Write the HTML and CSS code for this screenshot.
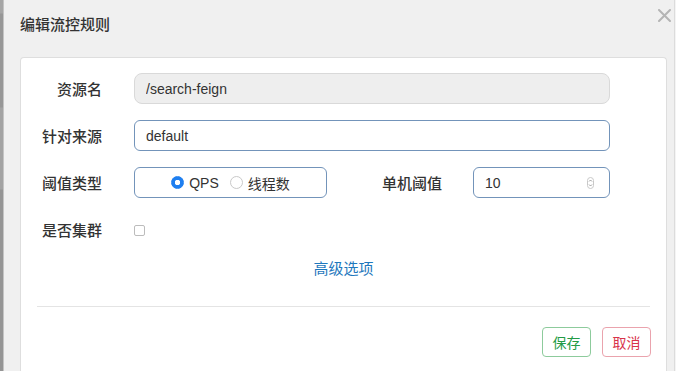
FILE: index.html
```html
<!DOCTYPE html>
<html lang="zh-CN">
<head>
    <meta charset="UTF-8">
    <meta name="viewport" content="width=device-width, initial-scale=1.0">
    <title>编辑流控规则</title>
    <link rel="stylesheet" href="styles.css">
</head>
<body>
    <div class="page-edge"></div>

    <div class="modal">
        <div class="modal-header">
            <h4 class="modal-title">编辑流控规则</h4>
            <span class="close">
                <svg width="13" height="13" viewBox="0 0 13 13">
                    <path d="M1 1 L12 12 M12 1 L1 12" stroke="#b4b4b4" stroke-width="2" stroke-linecap="round"/>
                </svg>
            </span>
        </div>

        <div class="panel">
            <form class="rule-form">
                <div class="form-row">
                    <label class="control-label">资源名</label>
                    <input class="form-control wide" type="text" value="/search-feign" disabled>
                </div>

                <div class="form-row">
                    <label class="control-label">针对来源</label>
                    <input class="form-control wide" type="text" value="default">
                </div>

                <div class="form-row">
                    <label class="control-label">阈值类型</label>
                    <div class="radio-box">
                        <label class="radio-item"><input type="radio" name="grade" class="radio" checked>QPS</label>
                        <label class="radio-item"><input type="radio" name="grade" class="radio">线程数</label>
                    </div>
                    <label class="control-label side-label">单机阈值</label>
                    <div class="num-box">
                        <input class="num-input" type="text" value="10">
                        <!-- spinner -->
                        <svg class="spinner" width="7" height="12" viewBox="0 0 7 12">
                            <rect x="0.5" y="0.5" width="6" height="11" rx="3" fill="#fff" stroke="#c8c8c8"/>
                            <path d="M2 4.5 L3.5 3 L5 4.5 M2 7.5 L3.5 9 L5 7.5" fill="none" stroke="#888" stroke-width="0.8"/>
                        </svg>
                    </div>
                </div>

                <div class="form-row">
                    <label class="control-label">是否集群</label>
                    <input type="checkbox" class="checkbox">
                </div>

                <div class="advanced">
                    <a class="advanced-link">高级选项</a>
                </div>
            </form>

            <hr class="divider">

            <div class="footer">
                <button class="btn btn-save">保存</button>
                <button class="btn btn-cancel">取消</button>
            </div>
        </div>
    </div>
</body>
</html>
```

FILE: styles.css
```css
body {
    margin: 0;
    padding: 0;
    height: 371px;
    overflow: hidden;
    display: flex;
    background-color: #f4f4f4;
    font-family: "Liberation Sans", "Noto Sans CJK SC", sans-serif;
    color: #333;
}

.page-edge {
    width: 4px;
    background: linear-gradient(to bottom, #a6a6a6 0, #a6a6a6 13px, #979797 14px, #979797 107px, #a3a3a3 108px, #a3a3a3 189px, #959595 190px);
    border-right: 1px solid #c4c4c4;
    box-sizing: border-box;
}

.modal {
    flex: 1;
    display: flex;
    flex-direction: column;
    background-color: #f0f0f0;
    border-right: 1px solid #dcdcdc;
    margin-right: 1px;
}

.modal-header {
    height: 57px;
    box-sizing: border-box;
    display: flex;
    justify-content: space-between;
    align-items: flex-start;
    padding: 0 3px 0 16px;
}

.modal-title {
    margin: 15px 0 0;
    font-size: 15px;
    line-height: 20px;
    font-weight: 500;
    color: #333;
}

.close {
    margin-top: 9px;
    width: 13px;
    height: 13px;
    display: flex;
}

.panel {
    flex: 1;
    margin: 0 7px 0 16px;
    background-color: #fff;
    border: 1px solid #dedede;
    border-bottom: none;
    border-radius: 4px 4px 0 0;
}

.rule-form {
    padding-top: 15px;
}

.form-row {
    display: flex;
    align-items: center;
    height: 31px;
    margin-bottom: 16px;
}

.control-label {
    width: 81px;
    margin-right: 32px;
    text-align: right;
    font-size: 15px;
    font-weight: 500;
    color: #333;
}

.form-control {
    height: 31px;
    box-sizing: border-box;
    padding: 0 11px;
    font-family: inherit;
    font-size: 14px;
    color: #333;
    background-color: #fff;
    border: 1px solid #7394ba;
    border-radius: 6px;
    outline: none;
}

.wide {
    width: 476px;
}

.form-control:disabled {
    background-color: #eee;
    border-color: #d9d9d9;
    border-radius: 8px;
    color: #333;
}

.radio-box {
    width: 193px;
    height: 31px;
    box-sizing: border-box;
    display: flex;
    align-items: center;
    justify-content: center;
    gap: 11px;
    border: 1px solid #7394ba;
    border-radius: 6px;
}

.radio-item {
    display: flex;
    align-items: center;
    gap: 5px;
    font-size: 14px;
    color: #333;
}

.radio {
    appearance: none;
    -webkit-appearance: none;
    margin: 0;
    width: 13px;
    height: 13px;
    border-radius: 50%;
    border: 1px solid #c9c9c9;
    background: #fff;
}

.radio:checked {
    border-color: #1f7ff0;
    background: radial-gradient(circle, #fff 0, #fff 2.5px, #1f7ff0 3px);
}

.side-label {
    width: 115px;
    margin-right: 31px;
}

.num-box {
    width: 137px;
    height: 31px;
    box-sizing: border-box;
    display: flex;
    align-items: center;
    padding: 0 15px 0 11px;
    border: 1px solid #7394ba;
    border-radius: 6px;
}

.num-input {
    flex: 1;
    min-width: 0;
    border: none;
    outline: none;
    padding: 0;
    font-family: inherit;
    font-size: 14px;
    color: #333;
}

.checkbox {
    appearance: none;
    -webkit-appearance: none;
    margin: 1px 0 0;
    width: 11px;
    height: 11px;
    border: 1px solid #bcbcbc;
    border-radius: 2px;
    background: #fff;
}

.advanced {
    text-align: center;
    margin-top: -2px;
    line-height: 20px;
}

.advanced-link {
    font-size: 15px;
    color: #1f78bd;
    cursor: pointer;
}

.divider {
    margin: 27px 16px 0;
    border: none;
    border-top: 1px solid #e4e4e4;
}

.footer {
    display: flex;
    justify-content: flex-end;
    gap: 11px;
    padding: 20px 15px 0;
}

.btn {
    width: 49px;
    height: 30px;
    padding: 0;
    font-family: inherit;
    font-size: 14px;
    background: #fff;
    border-radius: 4px;
    cursor: pointer;
}

.btn-save {
    color: #239b45;
    border: 1px solid #8dcb9c;
}

.btn-cancel {
    color: #d8334a;
    border: 1px solid #eaa3ad;
}
```
